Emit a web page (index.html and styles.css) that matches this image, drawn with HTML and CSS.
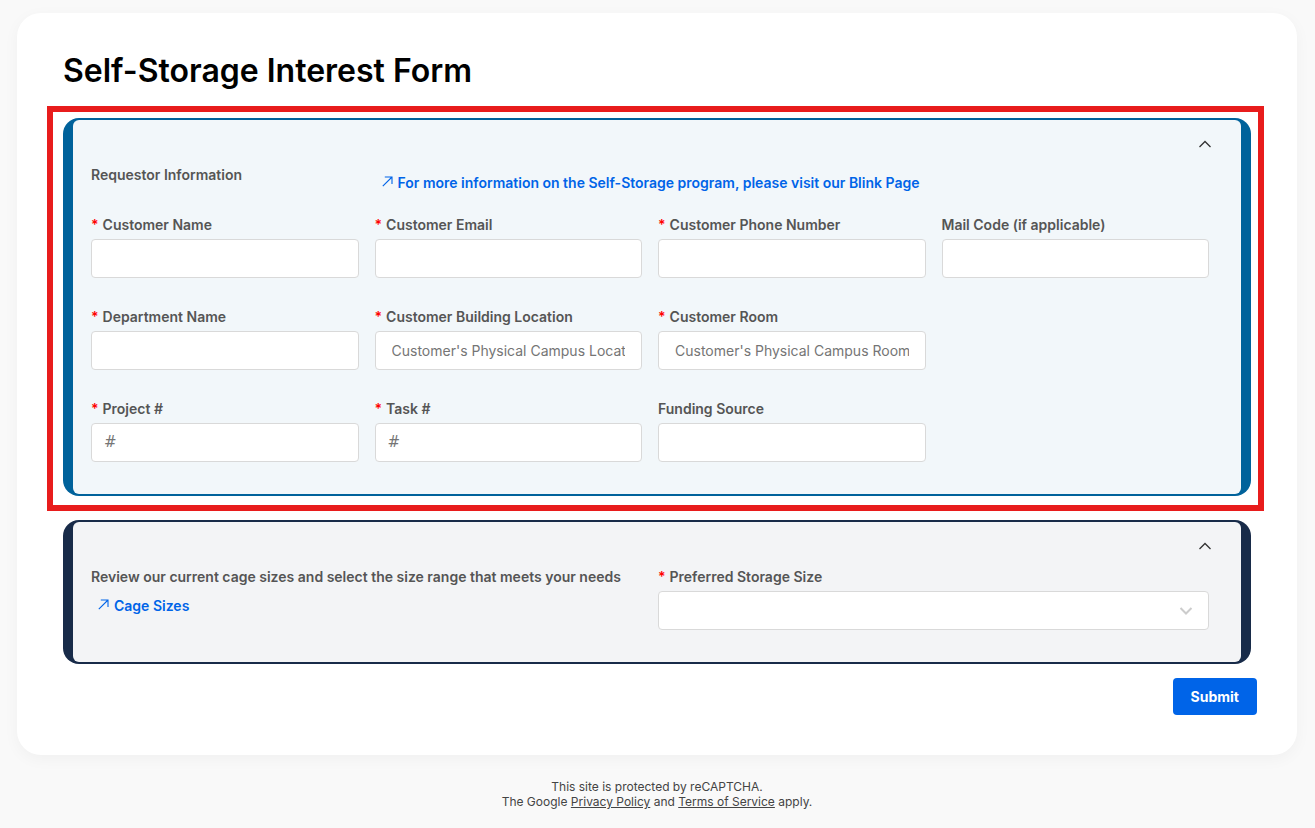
FILE: index.html
```
<!DOCTYPE html>
<html lang="en">

<head>
  <meta charset="UTF-8">
  <meta name="viewport" content="width=device-width, initial-scale=1.0">
  <title>Self-Storage Interest Form</title>
  <link rel="stylesheet" href="styles.css">
</head>

<body>
  <main class="card">
    <h1>Self-Storage Interest Form</h1>

    <form>
      <div class="highlight">
        <section class="panel panel-blue">
          <div class="panel-body">
            <div class="panel-bar">
              <button type="button" class="toggle" aria-label="Collapse requestor information">
                <svg width="14" height="8" viewBox="0 0 14 8"><path d="M1.5 7 7 1.5 12.5 7" /></svg>
              </button>
            </div>
            <div class="intro">
              <h2>Requestor Information</h2>
              <a href="#" class="link intro-link">
                <svg width="11" height="11" viewBox="0 0 11 11"><path d="M.8 10.2 10 1M2.8 1H10v7" /></svg>
                For more information on the Self-Storage program, please visit our Blink Page
              </a>
            </div>
            <div class="fields">
              <div class="field">
                <label class="required" for="name">Customer Name</label>
                <input type="text" id="name">
              </div>
              <div class="field">
                <label class="required" for="email">Customer Email</label>
                <input type="email" id="email">
              </div>
              <div class="field">
                <label class="required" for="phone">Customer Phone Number</label>
                <input type="tel" id="phone">
              </div>
              <div class="field">
                <label for="mailcode">Mail Code (if applicable)</label>
                <input type="text" id="mailcode">
              </div>

              <div class="field new-row">
                <label class="required" for="department">Department Name</label>
                <input type="text" id="department">
              </div>
              <div class="field">
                <label class="required" for="building">Customer Building Location</label>
                <input type="text" id="building" placeholder="Customer's Physical Campus Location">
              </div>
              <div class="field">
                <label class="required" for="room">Customer Room</label>
                <input type="text" id="room" placeholder="Customer's Physical Campus Room">
              </div>

              <div class="field new-row">
                <label class="required" for="project">Project #</label>
                <input type="text" class="number" id="project" placeholder="#">
              </div>
              <div class="field">
                <label class="required" for="task">Task #</label>
                <input type="text" class="number" id="task" placeholder="#">
              </div>
              <div class="field">
                <label for="funding">Funding Source</label>
                <input type="text" id="funding">
              </div>
            </div>
          </div>
        </section>
      </div>

      <section class="panel panel-navy">
        <div class="panel-body">
          <div class="panel-bar">
            <button type="button" class="toggle" aria-label="Collapse storage size">
              <svg width="14" height="8" viewBox="0 0 14 8"><path d="M1.5 7 7 1.5 12.5 7" /></svg>
            </button>
          </div>
          <div class="fields fields-half">
            <div class="field">
              <h2>Review our current cage sizes and select the size range that meets your needs</h2>
              <a href="#" class="link cage-link">
                <svg width="11" height="11" viewBox="0 0 11 11"><path d="M.8 10.2 10 1M2.8 1H10v7" /></svg>
                Cage Sizes
              </a>
            </div>
            <div class="field">
              <label class="required" for="size">Preferred Storage Size</label>
              <div class="select">
                <select id="size">
                  <option value=""></option>
                </select>
                <svg width="14" height="8" viewBox="0 0 14 8"><path d="M1.5 1 7 6.5 12.5 1" /></svg>
              </div>
            </div>
          </div>
        </div>
      </section>

      <div class="actions">
        <button type="submit" class="submit">Submit</button>
      </div>
    </form>
  </main>

  <footer>
    <p>This site is protected by reCAPTCHA.</p>
    <p>The Google <a href="#">Privacy Policy</a> and <a href="#">Terms of Service</a> apply.</p>
  </footer>
</body>

</html>
```

FILE: styles.css
```
* {
  box-sizing: border-box;
}

body {
  font-family: Inter, "Liberation Sans", sans-serif;
  font-size: 14px;
  line-height: 20px;
  background: #f9f9f9;
  margin: 0;
  padding: 13px 18px 0 17px;
  color: #555;
}

h1, h2, p {
  margin: 0;
}

svg {
  fill: none;
  stroke: currentColor;
  stroke-width: 1.3;
}

.card {
  background: white;
  border-radius: 24px;
  padding: 38px 46px 40px;
  box-shadow: 0 4px 16px rgba(0, 0, 0, 0.04);
}

h1 {
  color: #000;
  font-size: 32px;
  font-weight: 600;
  line-height: 40px;
  margin-bottom: 15px;
}

h2 {
  font-size: 14px;
  font-weight: 600;
  line-height: 20px;
}

/* red frame around the first panel */
.highlight {
  border: 6px solid #e81c1c;
  margin: 0 -13px 9px -16px;
  padding: 6px 7px 9px 10px;
}

.panel {
  border-radius: 16px;
  padding: 2px 10px;
}

.panel-body {
  border-radius: 6px;
  padding: 0 32px 32px 18px;
}

.panel-blue {
  background: #00629b;
}

.panel-blue .panel-body {
  background: #f2f7fa;
}

.panel-navy {
  background: #182b49;
}

.panel-navy .panel-body {
  background: #f3f4f6;
}

.panel-bar {
  display: flex;
  justify-content: flex-end;
  height: 45px;
  padding-top: 14px;
}

.toggle {
  display: flex;
  align-items: center;
  justify-content: center;
  width: 20px;
  height: 20px;
  margin-right: -6px;
  padding: 0;
  border: none;
  background: none;
  color: #333;
  cursor: pointer;
}

.intro {
  display: grid;
  grid-template-columns: repeat(4, 1fr);
  column-gap: 16px;
  height: 50px;
}

.link {
  display: flex;
  gap: 5px;
  color: #0064e8;
  font-weight: 600;
  text-decoration: none;
}

.link:hover {
  text-decoration: underline;
}

.link svg {
  margin-top: 3px;
  stroke-width: 1.1;
}

.intro-link {
  grid-column: span 3;
  margin: 8px 0 0 7px;
}

.cage-link {
  margin: 9px 0 0 7px;
}

.fields {
  display: grid;
  grid-template-columns: repeat(4, 1fr);
  gap: 29px 16px;
}

.fields-half {
  grid-template-columns: repeat(2, 1fr);
}

.new-row {
  grid-column-start: 1;
}

.field {
  min-width: 0;
}

label {
  display: block;
  font-weight: 600;
  margin-bottom: 4px;
}

.required::before {
  content: "*";
  color: #ff0000;
  margin-right: 4px;
}

input, select {
  display: block;
  width: 100%;
  height: 39px;
  padding: 0 16px;
  border: 1px solid #d9d9d9;
  border-radius: 4px;
  background: white;
  color: #333;
  font-family: inherit;
  font-size: 14px;
}

input::placeholder {
  color: #757575;
  opacity: 1;
}

.number {
  padding: 0 12px 2px;
  font-family: "DejaVu Sans", sans-serif;
  font-size: 15px;
}

.select {
  display: grid;
  align-items: center;
}

.select select, .select svg {
  grid-area: 1 / 1;
}

.select select {
  appearance: none;
}

.select svg {
  justify-self: end;
  margin-right: 16px;
  color: #ccc;
  stroke-width: 2;
  pointer-events: none;
}

.actions {
  display: flex;
  justify-content: flex-end;
  margin: 14px -6px 0 0;
}

.submit {
  height: 37px;
  padding: 0 18px;
  border: none;
  border-radius: 4px;
  background: #0064e8;
  color: white;
  font-family: inherit;
  font-size: 14px;
  font-weight: 700;
  cursor: pointer;
}

.submit:hover {
  background: #0052c2;
}

footer {
  padding: 24px 0 18px;
  color: #444;
  font-size: 12px;
  line-height: 15px;
  text-align: center;
}

footer a {
  color: inherit;
}
```
